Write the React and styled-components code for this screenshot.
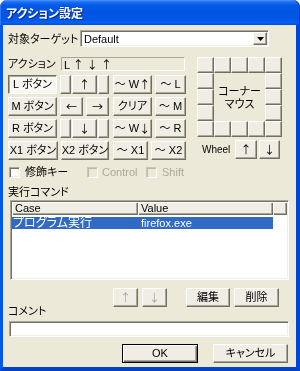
import React from 'react';
import styled, { createGlobalStyle, css } from 'styled-components';

const FONT = `"Liberation Sans", "Noto Sans CJK JP", sans-serif`;
const CJK = `"Noto Sans CJK JP", sans-serif`;

const Global = createGlobalStyle`
  html, body { margin: 0; padding: 0; background: #ffffff; }
  body { font-family: ${FONT}; }
`;

const Window = styled.div`
  width: 300px;
  height: 371px;
  display: flex;
  flex-direction: column;
  font-family: ${FONT};
  font-size: 11px;
  color: #000;
  font-feature-settings: "palt";
  will-change: transform;
  -webkit-font-smoothing: antialiased;
`;

const TitleBar = styled.div`
  height: 25px;
  flex: none;
  box-sizing: border-box;
  border-radius: 7px 7px 0 0;
  background: linear-gradient(180deg, #4a98ff 0%, #1c6cf5 8%, #0458e6 22%, #0054e3 50%, #0057e8 80%, #0062f6 90%, #004bd8 100%);
  box-shadow: inset 1px 0 #2a7af5, inset -1px 0 #0038b8;
  display: flex;
  align-items: center;
  padding-left: 6px;
`;

const Title = styled.span`
  font-family: ${CJK};
  font-weight: 700;
  font-size: 12px;
  line-height: 14px;
  color: #fff;
  text-shadow: 1px 1px #0a2a9c;
`;

const Frame = styled.div`
  flex: 1;
  display: flex;
  flex-direction: column;
  background: #ece9d8;
  border-style: solid;
  border-width: 0 4px 4px 3px;
  border-color: #0050e0 #0046d2 #0042c8 #0058ea;
  padding-left: 5px;
`;

const Arr = styled.span`
  font-family: ${CJK};
  font-size: 11px;
`;

const Label = styled.span`
  flex: none;
  width: ${p => (p.$w ? `${p.$w}px` : 'auto')};
  line-height: 12px;
  font-size: 11px;
  white-space: nowrap;
  color: ${p => (p.$disabled ? '#aca899' : '#000')};
`;

const TargetRow = styled.div`
  display: flex;
  align-items: center;
  margin-top: 5px;
  height: 17px;
`;

const Sunken = css`
  box-sizing: border-box;
  border: 1px solid;
  border-color: #aca899 #fff #fff #aca899;
  box-shadow: inset 1px 1px #716f64, inset -1px -1px #f1efe2;
`;

const Combo = styled.div`
  ${Sunken};
  width: 189px;
  height: 17px;
  background: #fff;
  display: flex;
  align-items: center;
  padding: 0 1px 0 3px;
`;

const ComboText = styled.span`
  font-size: 11px;
  line-height: 12px;
  flex: 1;
`;

const DropBtn = styled.div`
  box-sizing: border-box;
  width: 14px;
  height: 13px;
  background: #efede4;
  border: 1px solid;
  border-color: #fff #716f64 #716f64 #fff;
  box-shadow: inset -1px -1px #aca899;
  display: flex;
  align-items: center;
  justify-content: center;
`;

const ActionArea = styled.div`
  display: flex;
  gap: 11px;
  margin-top: 10px;
`;

const LeftCol = styled.div`
  width: 178px;
  display: flex;
  flex-direction: column;
  gap: 4px;
`;

const ActionRow = styled.div`
  display: flex;
  align-items: center;
  height: 14px;
`;

const StaticBox = styled.div`
  box-sizing: border-box;
  width: 124px;
  height: 14px;
  border: 1px solid;
  border-color: #aca899 #fff #fff #aca899;
  padding-left: 2px;
  line-height: 12px;
  white-space: pre;
`;

const BtnGrid = styled.div`
  display: flex;
  flex-direction: column;
  gap: 3px;
`;

const BtnRow = styled.div`
  display: flex;
  gap: 3px;
`;

const ArrowBlock = styled.div`
  width: 49px;
  display: flex;
  gap: ${p => p.$gap}px;
  margin-right: 1px;
`;

const Btn = styled.button`
  box-sizing: border-box;
  flex: none;
  width: ${p => p.$w}px;
  height: ${p => p.$h || 19}px;
  margin: 0;
  padding: 0;
  font-family: ${p => (p.$arrow ? CJK : FONT)};
  font-size: 11px;
  line-height: 1;
  font-feature-settings: "palt";
  color: ${p => (p.disabled ? '#aca899' : '#000')};
  background: #efede4;
  border: 1px solid;
  border-color: #fff #716f64 #716f64 #fff;
  box-shadow: inset -1px -1px #aca899;
  display: flex;
  align-items: center;
  justify-content: center;
  white-space: pre;
  ${p => p.$pressed && css`
    background: #f8f7f2;
    border-color: #716f64 #fff #fff #716f64;
    box-shadow: inset 1px 1px #aca899;
  `}
  ${p => p.$default && css`
    border-color: #000;
    box-shadow: inset 1px 1px #fff, inset -1px -1px #716f64, inset -2px -2px #aca899;
  `}
`;

const RightCol = styled.div`
  width: 85px;
  display: flex;
  flex-direction: column;
  gap: 3px;
`;

const CornerGrid = styled.div`
  display: grid;
  grid-template-columns: repeat(5, 17px);
  grid-template-rows: repeat(5, 16px);
`;

const CornerCenter = styled.div`
  grid-column: 2 / 5;
  grid-row: 2 / 5;
  display: flex;
  flex-direction: column;
  align-items: center;
  justify-content: center;
  text-align: center;
  font-size: 11px;
  line-height: 12px;
  gap: 1px;
`;

const WheelRow = styled.div`
  display: flex;
  align-items: center;
  height: 19px;
  gap: 2px;
`;

const WheelLabel = styled.span`
  width: 31px;
  padding-left: 5px;
  font-size: 10px;
  line-height: 12px;
`;

const CheckRow = styled.div`
  display: flex;
  align-items: center;
  height: 12px;
  margin-top: 6px;
  padding-left: 1px;
`;

const CheckItem = styled.label`
  display: flex;
  align-items: center;
  gap: ${p => p.$gap || 5}px;
  width: ${p => (p.$w ? `${p.$w}px` : 'auto')};
`;

const CheckBox = styled.span`
  ${Sunken};
  width: 11px;
  height: 11px;
  flex: none;
  background: ${p => (p.$disabled ? '#ece9d8' : '#fff')};
  ${p => p.$disabled && css`
    border-color: #cbc7b8 #fff #fff #cbc7b8;
    box-shadow: inset 1px 1px #bdb9aa;
  `}
`;

const SectionLabel = styled.div`
  line-height: 12px;
  margin-top: ${p => p.$mt}px;
`;

const ListView = styled.div`
  ${Sunken};
  margin: 2px 0 0 2px;
  width: 279px;
  height: 80px;
  background: #fff;
  padding: 1px;
`;

const Header = styled.div`
  display: flex;
  height: 13px;
`;

const HeaderCell = styled.div`
  box-sizing: border-box;
  width: ${p => (p.$w ? `${p.$w}px` : 'auto')};
  flex: ${p => (p.$w ? 'none' : '1')};
  height: 13px;
  background: #efede4;
  box-shadow: inset 1px 1px #fff, inset -1px -1px #716f64, inset -2px -2px #aca899;
  font-size: 11px;
  line-height: 13px;
  padding-left: 3px;
`;

const ListRow = styled.div`
  display: flex;
  width: 261px;
  height: 12px;
  margin-top: 2px;
  background: ${p => (p.$selected ? '#316ac5' : 'transparent')};
  color: ${p => (p.$selected ? '#fff' : '#000')};
`;

const ListCell = styled.div`
  box-sizing: border-box;
  width: ${p => p.$w}px;
  padding-left: ${p => p.$pl || 1}px;
  font-size: ${p => p.$size || 11}px;
  line-height: 12px;
  white-space: nowrap;
  overflow: hidden;
`;

const ButtonBar = styled.div`
  display: flex;
  height: 19px;
  margin-top: ${p => p.$mt}px;
  padding-left: ${p => p.$pl}px;
  gap: ${p => p.$gap}px;
`;

const Spacer = styled.div`
  width: ${p => p.$w}px;
  flex: none;
`;

const CommentInput = styled.div`
  ${Sunken};
  width: 280px;
  height: 16px;
  margin: 4px 0 0 1px;
  background: #fff;
`;

export default function App() {
  const ring = [];
  for (let r = 0; r < 5; r++) {
    for (let c = 0; c < 5; c++) {
      if (r === 0 || r === 4 || c === 0 || c === 4) {
        ring.push(
          <Btn key={`${r}-${c}`} $w={17} $h={16} style={{ gridRow: r + 1, gridColumn: c + 1 }} />
        );
      }
    }
  }

  return (
    <Window>
      <Global />
      <TitleBar>
        <Title>アクション設定</Title>
      </TitleBar>
      <Frame>
        <TargetRow>
          <Label $w={72}>対象ターゲット</Label>
          <Combo>
            <ComboText>Default</ComboText>
            <DropBtn>
              <svg width="7" height="4" viewBox="0 0 7 4">
                <polygon points="0,0 7,0 3.5,4" fill="#000" />
              </svg>
            </DropBtn>
          </Combo>
        </TargetRow>

        <ActionArea>
          <LeftCol>
            <ActionRow>
              <Label $w={53}>アクション</Label>
              <StaticBox>L <Arr>↑</Arr> <Arr>↓</Arr> <Arr>↑</Arr></StaticBox>
            </ActionRow>
            <BtnGrid>
              <BtnRow>
                <Btn $w={49} $pressed>L ボタン</Btn>
                <ArrowBlock $gap={1}>
                  <Btn $w={11} />
                  <Btn $w={25} $arrow>↑</Btn>
                  <Btn $w={11} />
                </ArrowBlock>
                <Btn $w={39}>～ W<Arr>↑</Arr></Btn>
                <Btn $w={31}>～ L</Btn>
              </BtnRow>
              <BtnRow>
                <Btn $w={49}>M ボタン</Btn>
                <ArrowBlock $gap={3}>
                  <Btn $w={23} $arrow>←</Btn>
                  <Btn $w={23} $arrow>→</Btn>
                </ArrowBlock>
                <Btn $w={39}>クリア</Btn>
                <Btn $w={31}>～ M</Btn>
              </BtnRow>
              <BtnRow>
                <Btn $w={49}>R ボタン</Btn>
                <ArrowBlock $gap={1}>
                  <Btn $w={11} />
                  <Btn $w={25} $arrow>↓</Btn>
                  <Btn $w={11} />
                </ArrowBlock>
                <Btn $w={39}>～ W<Arr>↓</Arr></Btn>
                <Btn $w={31}>～ R</Btn>
              </BtnRow>
              <BtnRow>
                <Btn $w={50}>X1 ボタン</Btn>
                <Btn $w={48} style={{ marginRight: 1 }}>X2 ボタン</Btn>
                <Btn $w={35}>～ X1</Btn>
                <Btn $w={35}>～ X2</Btn>
              </BtnRow>
            </BtnGrid>
          </LeftCol>
          <RightCol>
            <CornerGrid>
              {ring}
              <CornerCenter>
                <span>コーナー</span>
                <span>マウス</span>
              </CornerCenter>
            </CornerGrid>
            <WheelRow>
              <WheelLabel>Wheel</WheelLabel>
              <Btn $w={22} $arrow>↑</Btn>
              <Btn $w={21} $arrow>↓</Btn>
            </WheelRow>
          </RightCol>
        </ActionArea>

        <CheckRow>
          <CheckItem $w={78}>
            <CheckBox />
            <Label>修飾キー</Label>
          </CheckItem>
          <CheckItem $w={59} $gap={4}>
            <CheckBox $disabled />
            <Label $disabled>Control</Label>
          </CheckItem>
          <CheckItem $gap={5}>
            <CheckBox $disabled />
            <Label $disabled>Shift</Label>
          </CheckItem>
        </CheckRow>

        <SectionLabel $mt={8}>実行コマンド</SectionLabel>
        <ListView>
          <Header>
            <HeaderCell $w={126}>Case</HeaderCell>
            <HeaderCell $w={135}>Value</HeaderCell>
            <HeaderCell />
          </Header>
          <ListRow $selected>
            <ListCell $w={126} $size={12}>プログラム実行</ListCell>
            <ListCell $w={135} $pl={3}>firefox.exe</ListCell>
          </ListRow>
        </ListView>

        <ButtonBar $mt={8} $pl={105} $gap={4}>
          <Btn $w={25} $arrow disabled>↑</Btn>
          <Btn $w={25} $arrow disabled>↓</Btn>
          <Spacer $w={11} />
          <Btn $w={44}>編集</Btn>
          <Btn $w={45}>削除</Btn>
        </ButtonBar>

        <SectionLabel $mt={-2}>コメント</SectionLabel>
        <CommentInput />

        <ButtonBar $mt={7} $pl={114} $gap={15}>
          <Btn $w={76} $default>OK</Btn>
          <Btn $w={75}>キャンセル</Btn>
        </ButtonBar>
      </Frame>
    </Window>
  );
}
